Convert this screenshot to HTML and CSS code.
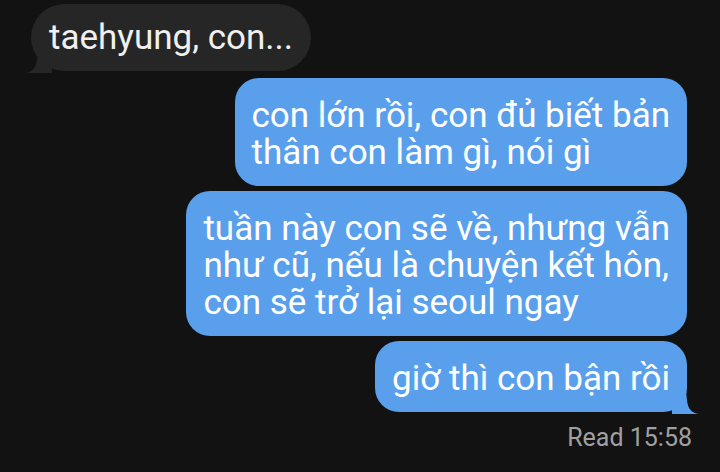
FILE: index.html
```html
<!DOCTYPE html>
<html lang="vi">
<head>
<meta charset="utf-8">
<link rel="stylesheet" href="styles.css">
</head>
<body>
<div class="chat">
  <div class="row in">
    <div class="bubble recv">taehyung, con...
      <svg class="tail tail-l" viewBox="0 0 28 22" width="28" height="22"><path d="M28 0 L28 22 L1 22 Q12 21 13 8 L14 0 Z" fill="#262626"/></svg>
    </div>
  </div>
  <div class="row out">
    <div class="bubble sent">con lớn rồi, con đủ biết bản<br>thân con làm gì, nói gì</div>
  </div>
  <div class="row out">
    <div class="bubble sent">tuần này con sẽ về, nhưng vẫn<br>như cũ, nếu là chuyện kết hôn,<br>con sẽ trở lại seoul ngay</div>
  </div>
  <div class="row out">
    <div class="bubble sent">giờ thì con bận rồi
      <svg class="tail tail-r" viewBox="0 0 28 22" width="28" height="22"><path d="M0 0 L0 22 L27 22 Q16 21 15 8 L14 0 Z" fill="#599fec"/></svg>
    </div>
  </div>
  <div class="status">Read 15:58</div>
</div>
</body>
</html>
```
FILE: styles.css
```css
html, body {
  margin: 0;
  padding: 0;
  background: #121212;
  width: 720px;
  height: 472px;
  overflow: hidden;
}
.chat {
  display: flex;
  flex-direction: column;
  padding: 4px 33px 0 31px;
  font-family: Roboto, "Noto Sans", sans-serif;
}
.row {
  display: flex;
}
.row.in {
  justify-content: flex-start;
  margin-bottom: 7px;
}
.row.out {
  justify-content: flex-end;
  margin-bottom: 5px;
}
.bubble {
  position: relative;
  font-size: 35px;
  line-height: 37px;
  padding: 19px 17px 15px;
  border-radius: 24px;
  color: #fff;
}
.recv {
  background: #262626;
  color: #f0f0f0;
  border-radius: 34px;
  padding: 15px 18px;
}
.sent {
  background: #599fec;
}
.tail {
  position: absolute;
  bottom: -2px;
  display: block;
}
.tail-l {
  left: -7px;
}
.tail-r {
  right: -13px;
}
.status {
  align-self: flex-end;
  margin-right: -5px;
  margin-top: 6px;
  font-size: 25px;
  line-height: 30px;
  color: #a0a0a0;
}
```
